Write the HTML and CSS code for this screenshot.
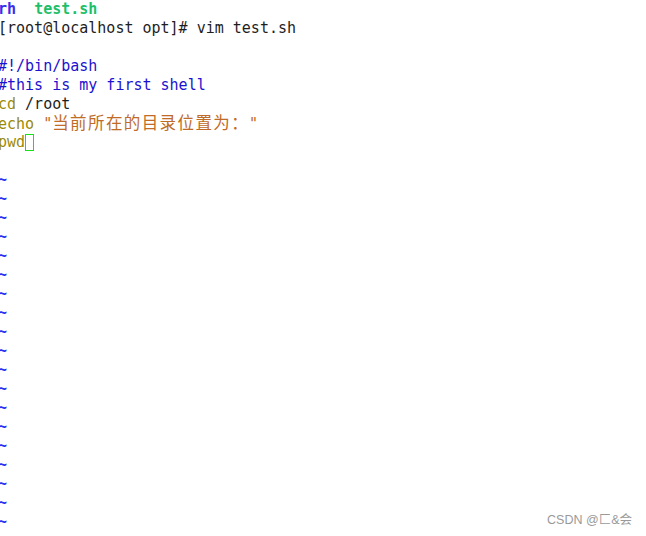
FILE: index.html
```html
<!DOCTYPE html>
<html>
<head>
<meta charset="utf-8">
<link rel="stylesheet" href="styles.css">
</head>
<body>
<div class="term">
<div class="line"><span class="dir">rh</span>  <span class="exe">test.sh</span></div>
<div class="line">[root@localhost opt]# vim test.sh</div>
<div class="line"> </div>
<div class="line"><span class="cmt">#!/bin/bash</span></div>
<div class="line"><span class="cmt">#this is my first shell</span></div>
<div class="line"><span class="stmt">cd</span> /root</div>
<div class="line"><span class="stmt">echo</span> <span class="str">"<span class="wide">当前所在的目录位置为：</span>"</span></div>
<div class="line"><span class="stmt">pwd</span><span class="cursor"></span></div>
<div class="line"> </div>
<div class="line tilde">~</div>
<div class="line tilde">~</div>
<div class="line tilde">~</div>
<div class="line tilde">~</div>
<div class="line tilde">~</div>
<div class="line tilde">~</div>
<div class="line tilde">~</div>
<div class="line tilde">~</div>
<div class="line tilde">~</div>
<div class="line tilde">~</div>
<div class="line tilde">~</div>
<div class="line tilde">~</div>
<div class="line tilde">~</div>
<div class="line tilde">~</div>
<div class="line tilde">~</div>
<div class="line tilde">~</div>
<div class="line tilde">~</div>
<div class="line tilde">~</div>
<div class="line tilde">~</div>
</div>
<div class="watermark">CSDN @匚&amp;会</div>
</body>
</html>
```
FILE: styles.css
```css
html, body {
  margin: 0;
  padding: 0;
  background: #ffffff;
  width: 646px;
  height: 536px;
  overflow: hidden;
}
body {
  position: relative;
}
.term {
  font-family: "DejaVu Sans Mono", "Noto Sans CJK SC", monospace;
  font-size: 15px;
  line-height: 19px;
  color: #1e1e1e;
  margin: 0 0 0 -2px;
}
.line {
  height: 19px;
  white-space: pre;
}
.dir {
  color: #3a2eea;
  font-weight: bold;
}
.exe {
  color: #1fbf6a;
  font-weight: bold;
}
.cmt {
  color: #1c12d0;
}
.stmt {
  color: #9a8a08;
}
.str {
  color: #c06b28;
}
.wide {
  font-size: 16.5px;
  letter-spacing: 1.4px;
  line-height: 19px;
}
.cursor {
  display: inline-block;
  width: 7px;
  height: 15px;
  border: 1px solid #19e019;
  vertical-align: -4px;
}
.tilde {
  color: #2e2ef2;
  font-weight: bold;
}
.watermark {
  position: absolute;
  right: 14px;
  bottom: 8px;
  font-family: "Liberation Sans", "Noto Sans CJK SC", sans-serif;
  font-size: 12.5px;
  color: #9a9a9a;
}
```
